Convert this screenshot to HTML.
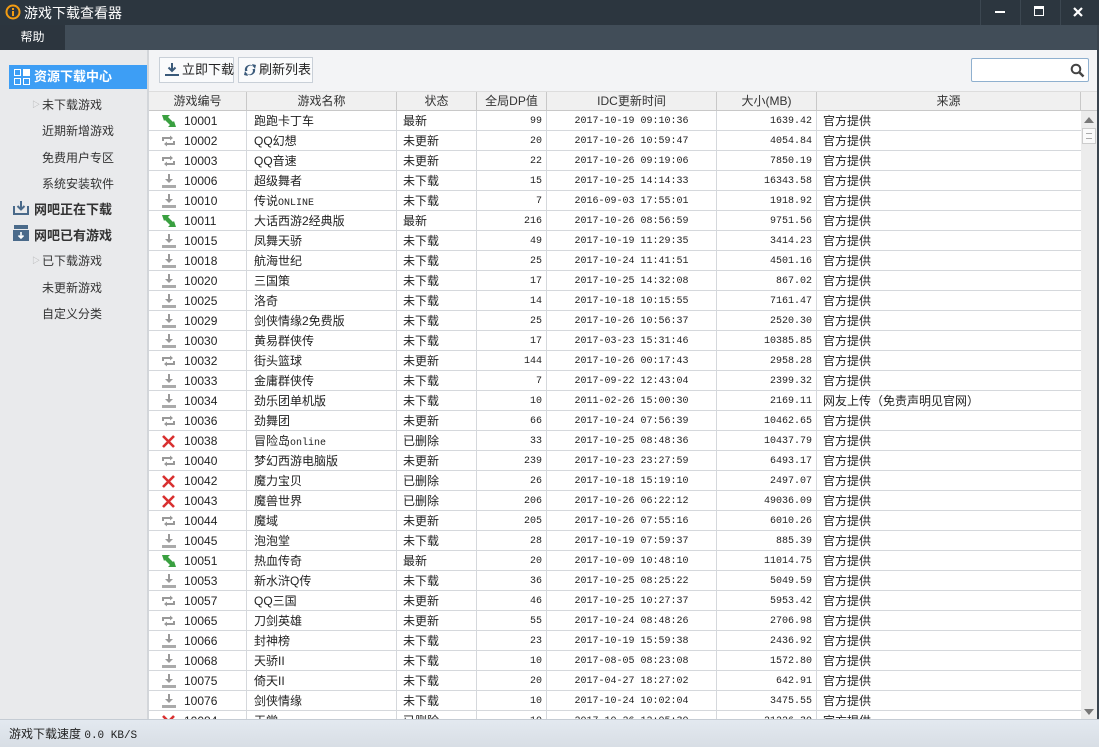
<!DOCTYPE html>
<html><head><meta charset="utf-8">
<style>
*{margin:0;padding:0;box-sizing:border-box}
body{width:1099px;height:747px;overflow:hidden;font-family:"Liberation Sans","Noto Sans CJK SC",sans-serif;font-size:12px;color:#222;background:#fff;position:relative}
.abs{position:absolute}
#title{left:0;top:0;width:1099px;height:25px;background:#2c363f;color:#fff;font-size:14px}
#menu{left:0;top:25px;width:1099px;height:25px;background:#414d58}
#side{left:0;top:50px;width:147px;height:669px;background:#e9eaec}
#div{left:147px;top:50px;width:2px;height:669px;background:#d3d6da}
#tool{left:149px;top:50px;width:950px;height:41px;background:#f3f4f6}
.btn{position:absolute;top:7px;height:26px;border:1px solid #c9d0d8;background:#fafbfc;font-size:13px;line-height:24px;padding-left:22px;white-space:nowrap}
#hdr{left:149px;top:91px;width:950px;height:20px;background:#f0f0f0;border-bottom:1px solid #c8c8c8;border-top:1px solid #ddd}
.h{position:absolute;top:0;height:19px;line-height:19px;text-align:center;border-right:1px solid #c8c8c8;color:#333}
.row{position:absolute;left:149px;width:932px;height:20px;border-bottom:1px solid #d5d8dc}
.c{position:absolute;top:0;height:19px;line-height:21px;border-right:1px solid #d5d8dc;white-space:nowrap}
.m{font-family:"Liberation Mono","Noto Sans CJK SC",monospace;font-size:10px}
.ic{position:absolute;left:12px;top:3px}
#status{left:0;top:719px;width:1099px;height:28px;background:linear-gradient(#e3e9f0,#d8dee5);border-top:1px solid #c5ccd4;font-size:12px;line-height:28px;padding-left:9px}
.si{position:absolute;font-size:12px;color:#333}
.tri{position:absolute;color:#aaa;font-size:8px}
</style></head><body>
<div id="title" class="abs">
 <svg class="abs" style="left:5px;top:4px" width="16" height="16"><circle cx="8" cy="8" r="6.5" fill="none" stroke="#f39c12" stroke-width="2"/><rect x="7" y="4" width="2" height="2" fill="#f39c12"/><rect x="7" y="7" width="2" height="5" fill="#f39c12"/></svg>
 <span class="abs" style="left:24px;top:3px">游戏下载查看器</span>
 <div class="abs" style="left:980px;top:0;width:1px;height:25px;background:#3c4751"></div>
 <div class="abs" style="left:1020px;top:0;width:1px;height:25px;background:#3c4751"></div>
 <div class="abs" style="left:1060px;top:0;width:1px;height:25px;background:#3c4751"></div>
 <div class="abs" style="left:995px;top:11px;width:10px;height:2px;background:#fff"></div>
 <div class="abs" style="left:1034px;top:6px;width:10px;height:10px;border:1px solid #fff;border-top-width:3px"></div>
 <svg class="abs" style="left:1073px;top:7px" width="10" height="10"><path d="M1 1L9 9M9 1L1 9" stroke="#fff" stroke-width="2.2"/></svg>
</div>
<div id="menu" class="abs"><div class="abs" style="left:0;top:0;width:65px;height:25px;background:#2c353e;color:#fff;font-size:12px;line-height:25px;text-align:center">帮助</div></div>
<div id="side" class="abs">
 <div class="abs" style="left:9px;top:15px;width:138px;height:24px;background:#3d9ef5;color:#fff;font-weight:bold;font-size:13px;line-height:24px;padding-left:25px">资源下载中心</div>
 <svg class="abs" style="left:14px;top:19px" width="16" height="16"><rect x="0.5" y="0.5" width="6" height="6" fill="none" stroke="#fff"/><rect x="9" y="0" width="7" height="7" fill="#fff"/><rect x="0.5" y="9.5" width="6" height="6" fill="none" stroke="#fff"/><rect x="9.5" y="9.5" width="6" height="6" fill="none" stroke="#fff"/></svg>
 <span class="tri" style="left:32px;top:49px">▷</span><span class="si" style="left:42px;top:46px">未下载游戏</span>
 <span class="si" style="left:42px;top:72px">近期新增游戏</span>
 <span class="si" style="left:42px;top:99px">免费用户专区</span>
 <span class="si" style="left:42px;top:125px">系统安装软件</span>
 <svg class="abs" style="left:13px;top:151px" width="16" height="14"><path d="M8 0v8M4.5 5L8 8.5 11.5 5" stroke="#4a6a8a" stroke-width="2" fill="none"/><path d="M1 5v8h14V5" stroke="#4a6a8a" stroke-width="2" fill="none"/></svg>
 <span class="si" style="left:34px;top:149px;font-weight:bold;font-size:13px">网吧正在下载</span>
 <svg class="abs" style="left:13px;top:175px" width="16" height="16"><rect x="1" y="0" width="14" height="4" fill="#4a6a8a"/><rect x="0" y="5" width="16" height="11" fill="#4a6a8a"/><path d="M8 7v6M5.5 10.5L8 13 10.5 10.5" stroke="#fff" stroke-width="1.6" fill="none"/></svg>
 <span class="si" style="left:34px;top:175px;font-weight:bold;font-size:13px">网吧已有游戏</span>
 <span class="tri" style="left:32px;top:205px">▷</span><span class="si" style="left:42px;top:202px">已下载游戏</span>
 <span class="si" style="left:42px;top:229px">未更新游戏</span>
 <span class="si" style="left:42px;top:255px">自定义分类</span>
</div>
<div id="div" class="abs"></div>
<div id="tool" class="abs">
 <div class="btn" style="left:10px;width:75px">立即下载<svg class="abs" style="left:5px;top:5px" width="14" height="14"><path d="M7 0v8M3.5 4.5L7 8 10.5 4.5" stroke="#3a5a7a" stroke-width="2" fill="none"/><rect x="0" y="11" width="14" height="2" fill="#3a5a7a"/></svg></div>
 <div class="btn" style="left:89px;width:75px;padding-left:20px">刷新列表<svg class="abs" style="left:4px;top:5px" width="14" height="14"><path d="M2 8A5 5 0 0 1 10 3L9 1 13 2 12 6 11 4.5A3.5 3.5 0 0 0 4.5 8Z" fill="#3a5a7a"/><path d="M12 6A5 5 0 0 1 4 11L5 13 1 12 2 8 3 9.5A3.5 3.5 0 0 0 9.5 6Z" fill="#3a5a7a"/></svg></div>
 <div class="abs" style="left:822px;top:8px;width:118px;height:24px;border:1px solid #8fb0cf;background:#fff;border-radius:2px"><svg class="abs" style="left:98px;top:4px" width="15" height="15"><circle cx="6" cy="6" r="4.3" stroke="#444" stroke-width="2" fill="none"/><path d="M9 9L13.5 13.5" stroke="#444" stroke-width="2.5"/></svg></div>
</div>
<div id="hdr" class="abs">
 <div class="h" style="left:0;width:98px">游戏编号</div>
 <div class="h" style="left:98px;width:150px">游戏名称</div>
 <div class="h" style="left:248px;width:80px">状态</div>
 <div class="h" style="left:328px;width:70px">全局DP值</div>
 <div class="h" style="left:398px;width:170px">IDC更新时间</div>
 <div class="h" style="left:568px;width:100px">大小(MB)</div>
 <div class="h" style="left:668px;width:264px">来源</div>
</div>
<svg width="0" height="0" style="position:absolute"><defs>
<g id="ig"><path d="M1 1L9 1 7 3 13 9 11 11 5 5 3 7Z" fill="#3aa040"/><path d="M15 13L7 13 9 11 3 5 5 3 11 9 13 7Z" fill="#3aa040"/></g>
<g id="ir"><path d="M2 7V4H11" stroke="#999" stroke-width="2" fill="none"/><path d="M9 1.5L12 4 9 6.5Z" fill="#999"/><path d="M13 7V10H4" stroke="#999" stroke-width="2" fill="none"/><path d="M6 7.5L3 10 6 12.5Z" fill="#999"/></g>
<g id="id"><path d="M8 0V7" stroke="#999" stroke-width="2"/><path d="M4 5H12L8 9Z" fill="#999"/><rect x="1" y="11" width="14" height="3" fill="#aaa"/></g>
<g id="ix"><path d="M2 2L13 13M13 2L2 13" stroke="#d83030" stroke-width="2.6"/></g>
</defs></svg>
<div id="rows">
<div class="row" style="top:111px"><svg class="ic" width="16" height="14"><use href="#ig"/></svg><div class="c" style="left:0;width:98px;padding-left:35px">10001</div><div class="c" style="left:98px;width:150px;padding-left:7px">跑跑卡丁车</div><div class="c" style="left:248px;width:80px;padding-left:6px">最新</div><div class="c m" style="left:328px;width:70px;text-align:right;padding-right:4px">99</div><div class="c m" style="left:398px;width:170px;text-align:center">2017-10-19 09:10:36</div><div class="c m" style="left:568px;width:100px;text-align:right;padding-right:4px">1639.42</div><div class="c" style="left:668px;width:264px;padding-left:6px;border:0">官方提供</div></div>
<div class="row" style="top:131px"><svg class="ic" width="16" height="14"><use href="#ir"/></svg><div class="c" style="left:0;width:98px;padding-left:35px">10002</div><div class="c" style="left:98px;width:150px;padding-left:7px">QQ幻想</div><div class="c" style="left:248px;width:80px;padding-left:6px">未更新</div><div class="c m" style="left:328px;width:70px;text-align:right;padding-right:4px">20</div><div class="c m" style="left:398px;width:170px;text-align:center">2017-10-26 10:59:47</div><div class="c m" style="left:568px;width:100px;text-align:right;padding-right:4px">4054.84</div><div class="c" style="left:668px;width:264px;padding-left:6px;border:0">官方提供</div></div>
<div class="row" style="top:151px"><svg class="ic" width="16" height="14"><use href="#ir"/></svg><div class="c" style="left:0;width:98px;padding-left:35px">10003</div><div class="c" style="left:98px;width:150px;padding-left:7px">QQ音速</div><div class="c" style="left:248px;width:80px;padding-left:6px">未更新</div><div class="c m" style="left:328px;width:70px;text-align:right;padding-right:4px">22</div><div class="c m" style="left:398px;width:170px;text-align:center">2017-10-26 09:19:06</div><div class="c m" style="left:568px;width:100px;text-align:right;padding-right:4px">7850.19</div><div class="c" style="left:668px;width:264px;padding-left:6px;border:0">官方提供</div></div>
<div class="row" style="top:171px"><svg class="ic" width="16" height="14"><use href="#id"/></svg><div class="c" style="left:0;width:98px;padding-left:35px">10006</div><div class="c" style="left:98px;width:150px;padding-left:7px">超级舞者</div><div class="c" style="left:248px;width:80px;padding-left:6px">未下载</div><div class="c m" style="left:328px;width:70px;text-align:right;padding-right:4px">15</div><div class="c m" style="left:398px;width:170px;text-align:center">2017-10-25 14:14:33</div><div class="c m" style="left:568px;width:100px;text-align:right;padding-right:4px">16343.58</div><div class="c" style="left:668px;width:264px;padding-left:6px;border:0">官方提供</div></div>
<div class="row" style="top:191px"><svg class="ic" width="16" height="14"><use href="#id"/></svg><div class="c" style="left:0;width:98px;padding-left:35px">10010</div><div class="c" style="left:98px;width:150px;padding-left:7px">传说<span class="m">ONLINE</span></div><div class="c" style="left:248px;width:80px;padding-left:6px">未下载</div><div class="c m" style="left:328px;width:70px;text-align:right;padding-right:4px">7</div><div class="c m" style="left:398px;width:170px;text-align:center">2016-09-03 17:55:01</div><div class="c m" style="left:568px;width:100px;text-align:right;padding-right:4px">1918.92</div><div class="c" style="left:668px;width:264px;padding-left:6px;border:0">官方提供</div></div>
<div class="row" style="top:211px"><svg class="ic" width="16" height="14"><use href="#ig"/></svg><div class="c" style="left:0;width:98px;padding-left:35px">10011</div><div class="c" style="left:98px;width:150px;padding-left:7px">大话西游2经典版</div><div class="c" style="left:248px;width:80px;padding-left:6px">最新</div><div class="c m" style="left:328px;width:70px;text-align:right;padding-right:4px">216</div><div class="c m" style="left:398px;width:170px;text-align:center">2017-10-26 08:56:59</div><div class="c m" style="left:568px;width:100px;text-align:right;padding-right:4px">9751.56</div><div class="c" style="left:668px;width:264px;padding-left:6px;border:0">官方提供</div></div>
<div class="row" style="top:231px"><svg class="ic" width="16" height="14"><use href="#id"/></svg><div class="c" style="left:0;width:98px;padding-left:35px">10015</div><div class="c" style="left:98px;width:150px;padding-left:7px">凤舞天骄</div><div class="c" style="left:248px;width:80px;padding-left:6px">未下载</div><div class="c m" style="left:328px;width:70px;text-align:right;padding-right:4px">49</div><div class="c m" style="left:398px;width:170px;text-align:center">2017-10-19 11:29:35</div><div class="c m" style="left:568px;width:100px;text-align:right;padding-right:4px">3414.23</div><div class="c" style="left:668px;width:264px;padding-left:6px;border:0">官方提供</div></div>
<div class="row" style="top:251px"><svg class="ic" width="16" height="14"><use href="#id"/></svg><div class="c" style="left:0;width:98px;padding-left:35px">10018</div><div class="c" style="left:98px;width:150px;padding-left:7px">航海世纪</div><div class="c" style="left:248px;width:80px;padding-left:6px">未下载</div><div class="c m" style="left:328px;width:70px;text-align:right;padding-right:4px">25</div><div class="c m" style="left:398px;width:170px;text-align:center">2017-10-24 11:41:51</div><div class="c m" style="left:568px;width:100px;text-align:right;padding-right:4px">4501.16</div><div class="c" style="left:668px;width:264px;padding-left:6px;border:0">官方提供</div></div>
<div class="row" style="top:271px"><svg class="ic" width="16" height="14"><use href="#id"/></svg><div class="c" style="left:0;width:98px;padding-left:35px">10020</div><div class="c" style="left:98px;width:150px;padding-left:7px">三国策</div><div class="c" style="left:248px;width:80px;padding-left:6px">未下载</div><div class="c m" style="left:328px;width:70px;text-align:right;padding-right:4px">17</div><div class="c m" style="left:398px;width:170px;text-align:center">2017-10-25 14:32:08</div><div class="c m" style="left:568px;width:100px;text-align:right;padding-right:4px">867.02</div><div class="c" style="left:668px;width:264px;padding-left:6px;border:0">官方提供</div></div>
<div class="row" style="top:291px"><svg class="ic" width="16" height="14"><use href="#id"/></svg><div class="c" style="left:0;width:98px;padding-left:35px">10025</div><div class="c" style="left:98px;width:150px;padding-left:7px">洛奇</div><div class="c" style="left:248px;width:80px;padding-left:6px">未下载</div><div class="c m" style="left:328px;width:70px;text-align:right;padding-right:4px">14</div><div class="c m" style="left:398px;width:170px;text-align:center">2017-10-18 10:15:55</div><div class="c m" style="left:568px;width:100px;text-align:right;padding-right:4px">7161.47</div><div class="c" style="left:668px;width:264px;padding-left:6px;border:0">官方提供</div></div>
<div class="row" style="top:311px"><svg class="ic" width="16" height="14"><use href="#id"/></svg><div class="c" style="left:0;width:98px;padding-left:35px">10029</div><div class="c" style="left:98px;width:150px;padding-left:7px">剑侠情缘2免费版</div><div class="c" style="left:248px;width:80px;padding-left:6px">未下载</div><div class="c m" style="left:328px;width:70px;text-align:right;padding-right:4px">25</div><div class="c m" style="left:398px;width:170px;text-align:center">2017-10-26 10:56:37</div><div class="c m" style="left:568px;width:100px;text-align:right;padding-right:4px">2520.30</div><div class="c" style="left:668px;width:264px;padding-left:6px;border:0">官方提供</div></div>
<div class="row" style="top:331px"><svg class="ic" width="16" height="14"><use href="#id"/></svg><div class="c" style="left:0;width:98px;padding-left:35px">10030</div><div class="c" style="left:98px;width:150px;padding-left:7px">黄易群侠传</div><div class="c" style="left:248px;width:80px;padding-left:6px">未下载</div><div class="c m" style="left:328px;width:70px;text-align:right;padding-right:4px">17</div><div class="c m" style="left:398px;width:170px;text-align:center">2017-03-23 15:31:46</div><div class="c m" style="left:568px;width:100px;text-align:right;padding-right:4px">10385.85</div><div class="c" style="left:668px;width:264px;padding-left:6px;border:0">官方提供</div></div>
<div class="row" style="top:351px"><svg class="ic" width="16" height="14"><use href="#ir"/></svg><div class="c" style="left:0;width:98px;padding-left:35px">10032</div><div class="c" style="left:98px;width:150px;padding-left:7px">街头篮球</div><div class="c" style="left:248px;width:80px;padding-left:6px">未更新</div><div class="c m" style="left:328px;width:70px;text-align:right;padding-right:4px">144</div><div class="c m" style="left:398px;width:170px;text-align:center">2017-10-26 00:17:43</div><div class="c m" style="left:568px;width:100px;text-align:right;padding-right:4px">2958.28</div><div class="c" style="left:668px;width:264px;padding-left:6px;border:0">官方提供</div></div>
<div class="row" style="top:371px"><svg class="ic" width="16" height="14"><use href="#id"/></svg><div class="c" style="left:0;width:98px;padding-left:35px">10033</div><div class="c" style="left:98px;width:150px;padding-left:7px">金庸群侠传</div><div class="c" style="left:248px;width:80px;padding-left:6px">未下载</div><div class="c m" style="left:328px;width:70px;text-align:right;padding-right:4px">7</div><div class="c m" style="left:398px;width:170px;text-align:center">2017-09-22 12:43:04</div><div class="c m" style="left:568px;width:100px;text-align:right;padding-right:4px">2399.32</div><div class="c" style="left:668px;width:264px;padding-left:6px;border:0">官方提供</div></div>
<div class="row" style="top:391px"><svg class="ic" width="16" height="14"><use href="#id"/></svg><div class="c" style="left:0;width:98px;padding-left:35px">10034</div><div class="c" style="left:98px;width:150px;padding-left:7px">劲乐团单机版</div><div class="c" style="left:248px;width:80px;padding-left:6px">未下载</div><div class="c m" style="left:328px;width:70px;text-align:right;padding-right:4px">10</div><div class="c m" style="left:398px;width:170px;text-align:center">2011-02-26 15:00:30</div><div class="c m" style="left:568px;width:100px;text-align:right;padding-right:4px">2169.11</div><div class="c" style="left:668px;width:264px;padding-left:6px;border:0">网友上传（免责声明见官网）</div></div>
<div class="row" style="top:411px"><svg class="ic" width="16" height="14"><use href="#ir"/></svg><div class="c" style="left:0;width:98px;padding-left:35px">10036</div><div class="c" style="left:98px;width:150px;padding-left:7px">劲舞团</div><div class="c" style="left:248px;width:80px;padding-left:6px">未更新</div><div class="c m" style="left:328px;width:70px;text-align:right;padding-right:4px">66</div><div class="c m" style="left:398px;width:170px;text-align:center">2017-10-24 07:56:39</div><div class="c m" style="left:568px;width:100px;text-align:right;padding-right:4px">10462.65</div><div class="c" style="left:668px;width:264px;padding-left:6px;border:0">官方提供</div></div>
<div class="row" style="top:431px"><svg class="ic" width="16" height="14"><use href="#ix"/></svg><div class="c" style="left:0;width:98px;padding-left:35px">10038</div><div class="c" style="left:98px;width:150px;padding-left:7px">冒险岛<span class="m">online</span></div><div class="c" style="left:248px;width:80px;padding-left:6px">已删除</div><div class="c m" style="left:328px;width:70px;text-align:right;padding-right:4px">33</div><div class="c m" style="left:398px;width:170px;text-align:center">2017-10-25 08:48:36</div><div class="c m" style="left:568px;width:100px;text-align:right;padding-right:4px">10437.79</div><div class="c" style="left:668px;width:264px;padding-left:6px;border:0">官方提供</div></div>
<div class="row" style="top:451px"><svg class="ic" width="16" height="14"><use href="#ir"/></svg><div class="c" style="left:0;width:98px;padding-left:35px">10040</div><div class="c" style="left:98px;width:150px;padding-left:7px">梦幻西游电脑版</div><div class="c" style="left:248px;width:80px;padding-left:6px">未更新</div><div class="c m" style="left:328px;width:70px;text-align:right;padding-right:4px">239</div><div class="c m" style="left:398px;width:170px;text-align:center">2017-10-23 23:27:59</div><div class="c m" style="left:568px;width:100px;text-align:right;padding-right:4px">6493.17</div><div class="c" style="left:668px;width:264px;padding-left:6px;border:0">官方提供</div></div>
<div class="row" style="top:471px"><svg class="ic" width="16" height="14"><use href="#ix"/></svg><div class="c" style="left:0;width:98px;padding-left:35px">10042</div><div class="c" style="left:98px;width:150px;padding-left:7px">魔力宝贝</div><div class="c" style="left:248px;width:80px;padding-left:6px">已删除</div><div class="c m" style="left:328px;width:70px;text-align:right;padding-right:4px">26</div><div class="c m" style="left:398px;width:170px;text-align:center">2017-10-18 15:19:10</div><div class="c m" style="left:568px;width:100px;text-align:right;padding-right:4px">2497.07</div><div class="c" style="left:668px;width:264px;padding-left:6px;border:0">官方提供</div></div>
<div class="row" style="top:491px"><svg class="ic" width="16" height="14"><use href="#ix"/></svg><div class="c" style="left:0;width:98px;padding-left:35px">10043</div><div class="c" style="left:98px;width:150px;padding-left:7px">魔兽世界</div><div class="c" style="left:248px;width:80px;padding-left:6px">已删除</div><div class="c m" style="left:328px;width:70px;text-align:right;padding-right:4px">206</div><div class="c m" style="left:398px;width:170px;text-align:center">2017-10-26 06:22:12</div><div class="c m" style="left:568px;width:100px;text-align:right;padding-right:4px">49036.09</div><div class="c" style="left:668px;width:264px;padding-left:6px;border:0">官方提供</div></div>
<div class="row" style="top:511px"><svg class="ic" width="16" height="14"><use href="#ir"/></svg><div class="c" style="left:0;width:98px;padding-left:35px">10044</div><div class="c" style="left:98px;width:150px;padding-left:7px">魔域</div><div class="c" style="left:248px;width:80px;padding-left:6px">未更新</div><div class="c m" style="left:328px;width:70px;text-align:right;padding-right:4px">205</div><div class="c m" style="left:398px;width:170px;text-align:center">2017-10-26 07:55:16</div><div class="c m" style="left:568px;width:100px;text-align:right;padding-right:4px">6010.26</div><div class="c" style="left:668px;width:264px;padding-left:6px;border:0">官方提供</div></div>
<div class="row" style="top:531px"><svg class="ic" width="16" height="14"><use href="#id"/></svg><div class="c" style="left:0;width:98px;padding-left:35px">10045</div><div class="c" style="left:98px;width:150px;padding-left:7px">泡泡堂</div><div class="c" style="left:248px;width:80px;padding-left:6px">未下载</div><div class="c m" style="left:328px;width:70px;text-align:right;padding-right:4px">28</div><div class="c m" style="left:398px;width:170px;text-align:center">2017-10-19 07:59:37</div><div class="c m" style="left:568px;width:100px;text-align:right;padding-right:4px">885.39</div><div class="c" style="left:668px;width:264px;padding-left:6px;border:0">官方提供</div></div>
<div class="row" style="top:551px"><svg class="ic" width="16" height="14"><use href="#ig"/></svg><div class="c" style="left:0;width:98px;padding-left:35px">10051</div><div class="c" style="left:98px;width:150px;padding-left:7px">热血传奇</div><div class="c" style="left:248px;width:80px;padding-left:6px">最新</div><div class="c m" style="left:328px;width:70px;text-align:right;padding-right:4px">20</div><div class="c m" style="left:398px;width:170px;text-align:center">2017-10-09 10:48:10</div><div class="c m" style="left:568px;width:100px;text-align:right;padding-right:4px">11014.75</div><div class="c" style="left:668px;width:264px;padding-left:6px;border:0">官方提供</div></div>
<div class="row" style="top:571px"><svg class="ic" width="16" height="14"><use href="#id"/></svg><div class="c" style="left:0;width:98px;padding-left:35px">10053</div><div class="c" style="left:98px;width:150px;padding-left:7px">新水浒Q传</div><div class="c" style="left:248px;width:80px;padding-left:6px">未下载</div><div class="c m" style="left:328px;width:70px;text-align:right;padding-right:4px">36</div><div class="c m" style="left:398px;width:170px;text-align:center">2017-10-25 08:25:22</div><div class="c m" style="left:568px;width:100px;text-align:right;padding-right:4px">5049.59</div><div class="c" style="left:668px;width:264px;padding-left:6px;border:0">官方提供</div></div>
<div class="row" style="top:591px"><svg class="ic" width="16" height="14"><use href="#ir"/></svg><div class="c" style="left:0;width:98px;padding-left:35px">10057</div><div class="c" style="left:98px;width:150px;padding-left:7px">QQ三国</div><div class="c" style="left:248px;width:80px;padding-left:6px">未更新</div><div class="c m" style="left:328px;width:70px;text-align:right;padding-right:4px">46</div><div class="c m" style="left:398px;width:170px;text-align:center">2017-10-25 10:27:37</div><div class="c m" style="left:568px;width:100px;text-align:right;padding-right:4px">5953.42</div><div class="c" style="left:668px;width:264px;padding-left:6px;border:0">官方提供</div></div>
<div class="row" style="top:611px"><svg class="ic" width="16" height="14"><use href="#ir"/></svg><div class="c" style="left:0;width:98px;padding-left:35px">10065</div><div class="c" style="left:98px;width:150px;padding-left:7px">刀剑英雄</div><div class="c" style="left:248px;width:80px;padding-left:6px">未更新</div><div class="c m" style="left:328px;width:70px;text-align:right;padding-right:4px">55</div><div class="c m" style="left:398px;width:170px;text-align:center">2017-10-24 08:48:26</div><div class="c m" style="left:568px;width:100px;text-align:right;padding-right:4px">2706.98</div><div class="c" style="left:668px;width:264px;padding-left:6px;border:0">官方提供</div></div>
<div class="row" style="top:631px"><svg class="ic" width="16" height="14"><use href="#id"/></svg><div class="c" style="left:0;width:98px;padding-left:35px">10066</div><div class="c" style="left:98px;width:150px;padding-left:7px">封神榜</div><div class="c" style="left:248px;width:80px;padding-left:6px">未下载</div><div class="c m" style="left:328px;width:70px;text-align:right;padding-right:4px">23</div><div class="c m" style="left:398px;width:170px;text-align:center">2017-10-19 15:59:38</div><div class="c m" style="left:568px;width:100px;text-align:right;padding-right:4px">2436.92</div><div class="c" style="left:668px;width:264px;padding-left:6px;border:0">官方提供</div></div>
<div class="row" style="top:651px"><svg class="ic" width="16" height="14"><use href="#id"/></svg><div class="c" style="left:0;width:98px;padding-left:35px">10068</div><div class="c" style="left:98px;width:150px;padding-left:7px">天骄II</div><div class="c" style="left:248px;width:80px;padding-left:6px">未下载</div><div class="c m" style="left:328px;width:70px;text-align:right;padding-right:4px">10</div><div class="c m" style="left:398px;width:170px;text-align:center">2017-08-05 08:23:08</div><div class="c m" style="left:568px;width:100px;text-align:right;padding-right:4px">1572.80</div><div class="c" style="left:668px;width:264px;padding-left:6px;border:0">官方提供</div></div>
<div class="row" style="top:671px"><svg class="ic" width="16" height="14"><use href="#id"/></svg><div class="c" style="left:0;width:98px;padding-left:35px">10075</div><div class="c" style="left:98px;width:150px;padding-left:7px">倚天II</div><div class="c" style="left:248px;width:80px;padding-left:6px">未下载</div><div class="c m" style="left:328px;width:70px;text-align:right;padding-right:4px">20</div><div class="c m" style="left:398px;width:170px;text-align:center">2017-04-27 18:27:02</div><div class="c m" style="left:568px;width:100px;text-align:right;padding-right:4px">642.91</div><div class="c" style="left:668px;width:264px;padding-left:6px;border:0">官方提供</div></div>
<div class="row" style="top:691px"><svg class="ic" width="16" height="14"><use href="#id"/></svg><div class="c" style="left:0;width:98px;padding-left:35px">10076</div><div class="c" style="left:98px;width:150px;padding-left:7px">剑侠情缘</div><div class="c" style="left:248px;width:80px;padding-left:6px">未下载</div><div class="c m" style="left:328px;width:70px;text-align:right;padding-right:4px">10</div><div class="c m" style="left:398px;width:170px;text-align:center">2017-10-24 10:02:04</div><div class="c m" style="left:568px;width:100px;text-align:right;padding-right:4px">3475.55</div><div class="c" style="left:668px;width:264px;padding-left:6px;border:0">官方提供</div></div>
<div class="row" style="top:711px"><svg class="ic" width="16" height="14"><use href="#ix"/></svg><div class="c" style="left:0;width:98px;padding-left:35px">10084</div><div class="c" style="left:98px;width:150px;padding-left:7px">天堂</div><div class="c" style="left:248px;width:80px;padding-left:6px">已删除</div><div class="c m" style="left:328px;width:70px;text-align:right;padding-right:4px">10</div><div class="c m" style="left:398px;width:170px;text-align:center">2017-10-26 12:05:30</div><div class="c m" style="left:568px;width:100px;text-align:right;padding-right:4px">21226.30</div><div class="c" style="left:668px;width:264px;padding-left:6px;border:0">官方提供</div></div>
</div>
<div class="abs" style="left:1081px;top:111px;width:16px;height:608px;background:#ececec">
 <svg class="abs" style="left:3px;top:6px" width="10" height="6"><path d="M0 6L5 0 10 6Z" fill="#777"/></svg>
 <div class="abs" style="left:1px;top:17px;width:14px;height:16px;background:#fafafa;border:1px solid #ccc"><div style="margin:4px 3px;height:6px;border-top:1px solid #aaa;border-bottom:1px solid #aaa"></div></div>
 <svg class="abs" style="left:3px;top:598px" width="10" height="6"><path d="M0 0L5 6 10 0Z" fill="#777"/></svg>
</div>
<div class="abs" style="left:1097px;top:25px;width:2px;height:694px;background:#3a444e"></div>
<div id="status" class="abs">游戏下载速度 <span class="m" style="font-size:11px">0.0 KB/S</span></div>
</body></html>
